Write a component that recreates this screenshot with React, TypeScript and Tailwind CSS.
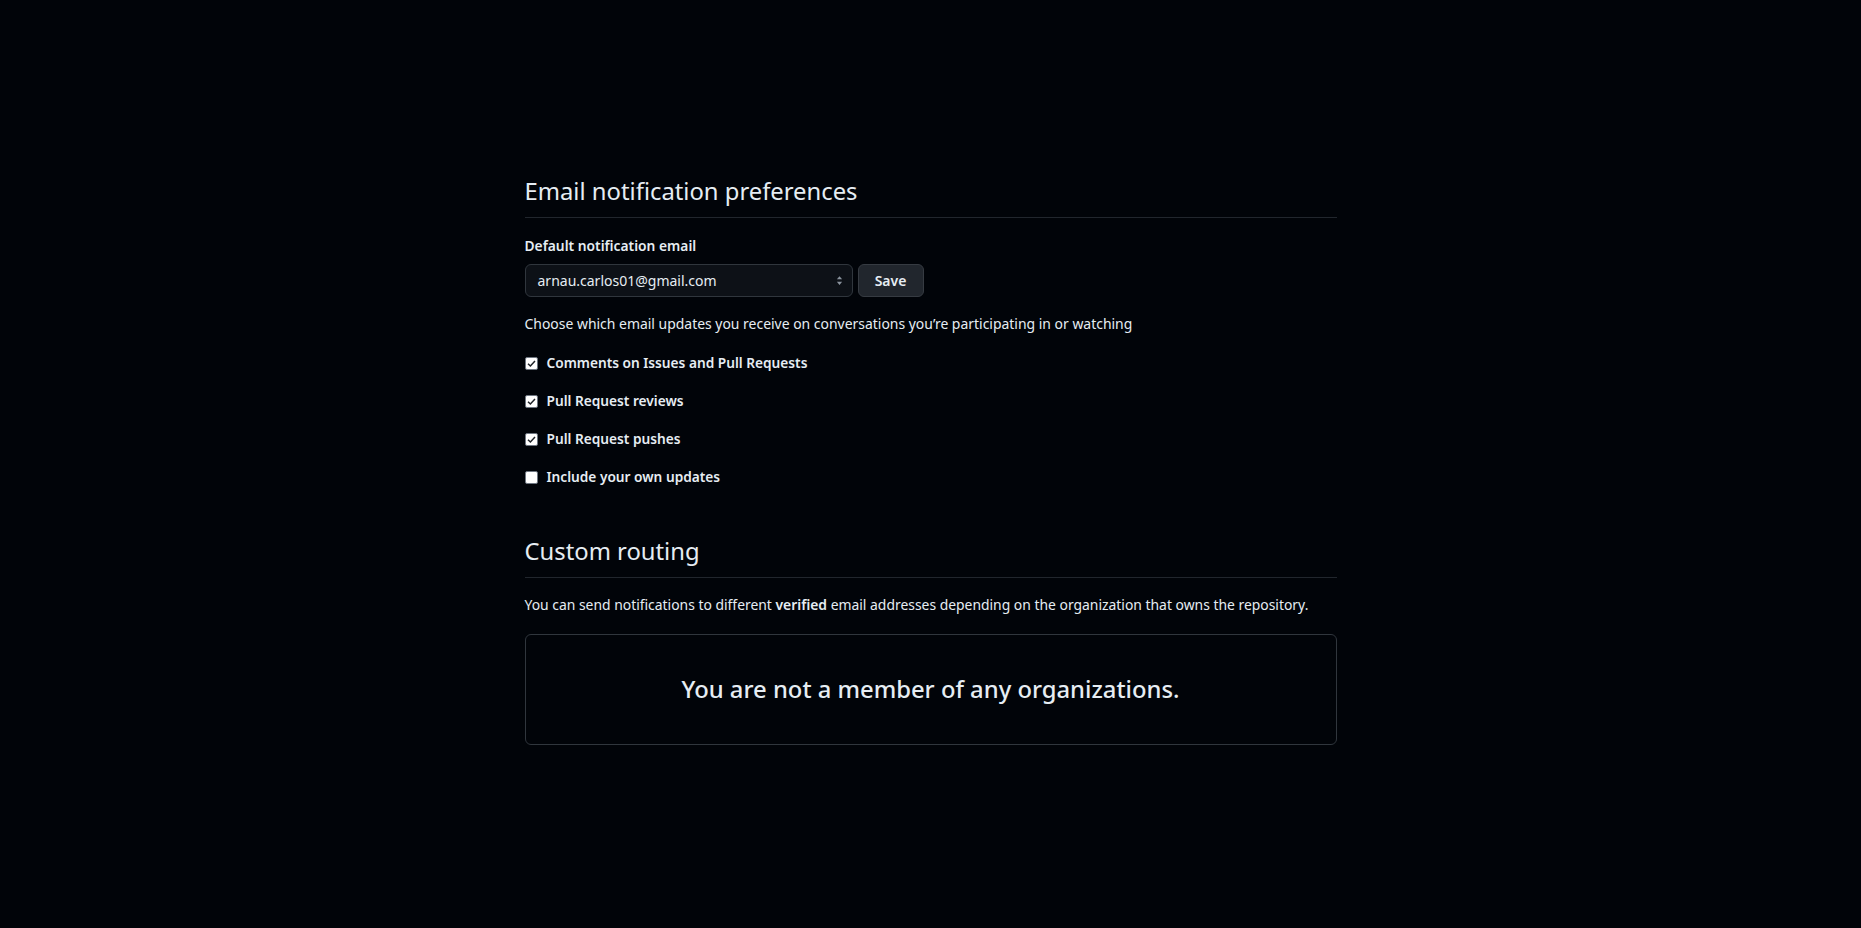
import { useState } from 'react'

const font = { fontFamily: '"Noto Sans", "Liberation Sans", sans-serif' }

const options = [
  { id: 'comments', label: 'Comments on Issues and Pull Requests', checked: true },
  { id: 'reviews', label: 'Pull Request reviews', checked: true },
  { id: 'pushes', label: 'Pull Request pushes', checked: true },
  { id: 'own', label: 'Include your own updates', checked: false },
]

function CheckRow({ label, checked, onToggle }: { label: string; checked: boolean; onToggle: () => void }) {
  return (
    <label className="flex h-5 cursor-pointer items-center gap-[9px]" onClick={onToggle}>
      <span className="flex h-[13px] w-[13px] items-center justify-center rounded-[2px] border border-[#6e7681] bg-white">
        {checked && (
          <svg viewBox="0 0 12 12" className="h-[11px] w-[11px]">
            <path d="M2.2 6.3 4.8 8.8 9.8 3.2" fill="none" stroke="#1f2328" strokeWidth="1.6" />
          </svg>
        )}
      </span>
      <span className="text-[13.7px] font-semibold text-[#e6edf3]">{label}</span>
    </label>
  )
}

export default function App() {
  const [checks, setChecks] = useState(options.map((o) => o.checked))

  return (
    <div className="min-h-[928px] w-full bg-[#010409] text-[#e6edf3]" style={font}>
      <div className="mx-auto w-[812px] pt-[173px]">
        {/* Email notification preferences */}
        <div className="border-b border-[#21262d] pb-2">
          <h2 className="text-[23.8px] font-normal leading-9 text-[#e6edf3]">Email notification preferences</h2>
        </div>

        <div className="mt-[18px] text-[13.8px] font-semibold leading-5">Default notification email</div>

        <div className="mt-2 flex gap-[5px]">
          <div className="flex h-[33px] w-[328px] items-center justify-between rounded-md border border-[#30363d] bg-[#0d1117] pl-[12px] pr-[9px]">
            <span className="text-[14px] text-[#e6edf3]">arnau.carlos01@gmail.com</span>
            <svg viewBox="0 0 8 12" className="h-[11px] w-[7px]">
              <path d="M4 1 7 4.5H1Z M4 11 1 7.5H7Z" fill="#8b949e" />
            </svg>
          </div>
          <button className="h-[33px] w-[66px] rounded-md border border-[#363b42] bg-[#21262d] text-[14px] font-semibold text-[#e6edf3]">
            Save
          </button>
        </div>

        <p className="mt-[17px] text-[13.95px] leading-5 text-[#e6edf3]">
          Choose which email updates you receive on conversations you’re participating in or watching
        </p>

        <div className="mt-[19px] flex flex-col gap-[18px]">
          {options.map((o, i) => (
            <CheckRow
              key={o.id}
              label={o.label}
              checked={checks[i]}
              onToggle={() => setChecks((c) => c.map((v, j) => (j === i ? !v : v)))}
            />
          ))}
        </div>

        {/* Custom routing */}
        <div className="mt-[46px] border-b border-[#21262d] pb-2">
          <h2 className="text-[23.8px] font-normal leading-9 text-[#e6edf3]">Custom routing</h2>
        </div>

        <p className="mt-[17px] text-[13.9px] leading-5 text-[#e6edf3]">
          You can send notifications to different <strong className="font-semibold">verified</strong> email addresses
          depending on the organization that owns the repository.
        </p>

        <div className="mt-[19px] flex h-[111px] items-center justify-center rounded-md border border-[#30363d] bg-[#010409]">
          <h3 className="text-[23.8px] font-medium text-[#e6edf3]">You are not a member of any organizations.</h3>
        </div>
      </div>
    </div>
  )
}
